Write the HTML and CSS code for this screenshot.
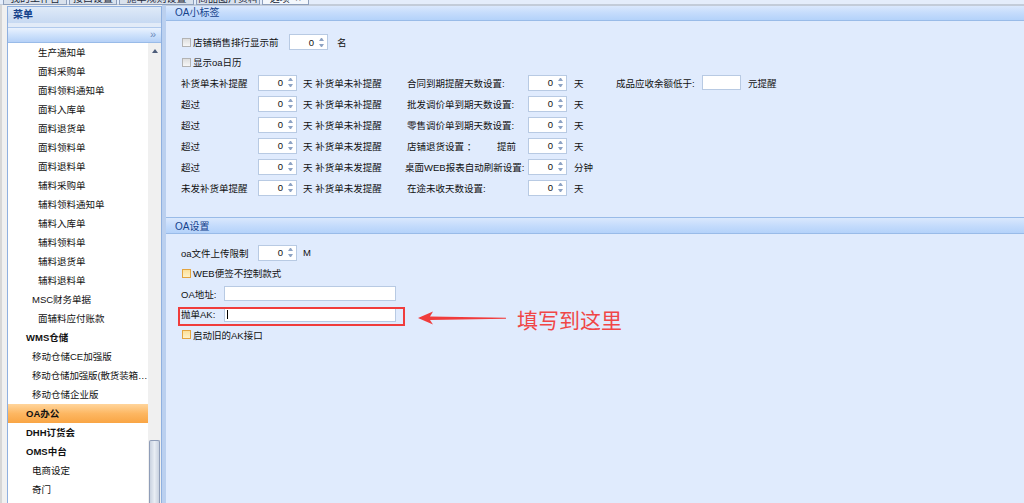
FILE: index.html
```html
<!DOCTYPE html>
<html lang="zh-CN">
<head>
    <meta charset="UTF-8">
    <title>选项</title>
    <link rel="stylesheet" href="styles.css">
</head>
<body>
    <div class="tabs">
        <div class="tab t1"><span>我的工作台</span></div>
        <div class="tab t2"><span>接口设置</span></div>
        <div class="tab t3"><span>抛单规则设置</span></div>
        <div class="tab t4"><span>商品图片资料</span></div>
        <div class="tab t5 on"><span>选项 &nbsp;×</span></div>
    </div>

    <div class="layout">
        <div class="side">
            <div class="side-head">菜单</div>
            <div class="side-tool">»</div>
            <div class="side-list">
                <div class="menu">
                    <div class="m3">生产通知单</div>
                    <div class="m3">面料采购单</div>
                    <div class="m3">面料领料通知单</div>
                    <div class="m3">面料入库单</div>
                    <div class="m3">面料退货单</div>
                    <div class="m3">面料领料单</div>
                    <div class="m3">面料退料单</div>
                    <div class="m3">辅料采购单</div>
                    <div class="m3">辅料领料通知单</div>
                    <div class="m3">辅料入库单</div>
                    <div class="m3">辅料领料单</div>
                    <div class="m3">辅料退货单</div>
                    <div class="m3">辅料退料单</div>
                    <div class="m2">MSC财务单据</div>
                    <div class="m3">面辅料应付账款</div>
                    <div class="m1">WMS仓储</div>
                    <div class="m2">移动仓储CE加强版</div>
                    <div class="m2 tight">移动仓储加强版(散货装箱版)</div>
                    <div class="m2">移动仓储企业版</div>
                    <div class="m1 on">OA办公</div>
                    <div class="m1">DHH订货会</div>
                    <div class="m1">OMS中台</div>
                    <div class="m2">电商设定</div>
                    <div class="m2">奇门</div>
                </div>
                <div class="scroll">
                    <div class="sb-up"></div>
                    <div class="thumb"></div>
                </div>
            </div>
        </div>

        <div class="content">
            <div class="panel-head">OA小标签</div>
            <div class="panel-body tags">
                <div class="row">
                    <span class="chk"></span>
                    <span class="w-rank">店铺销售排行显示前</span>
                    <span class="spin"><b>0</b><i class="arr"></i></span>
                    <span class="unit-name">名</span>
                </div>
                <div class="row">
                    <span class="chk"></span>
                    <span>显示oa日历</span>
                </div>

                <div class="frow">
                    <span class="c-lbl">补货单未补提醒</span>
                    <span class="spin"><b>0</b><i class="arr"></i></span>
                    <span class="c-suf">天 补货单未补提醒</span>
                    <span class="c-rl">合同到期提醒天数设置:</span>
                    <span class="spin"><b>0</b><i class="arr"></i></span>
                    <span class="c-rs">天</span>
                    <span class="c-ml">成品应收余额低于:</span>
                    <span class="txt w-money"></span>
                    <span class="c-mu">元提醒</span>
                </div>
                <div class="frow">
                    <span class="c-lbl">超过</span>
                    <span class="spin"><b>0</b><i class="arr"></i></span>
                    <span class="c-suf">天 补货单未补提醒</span>
                    <span class="c-rl">批发调价单到期天数设置:</span>
                    <span class="spin"><b>0</b><i class="arr"></i></span>
                    <span class="c-rs">天</span>
                </div>
                <div class="frow">
                    <span class="c-lbl">超过</span>
                    <span class="spin"><b>0</b><i class="arr"></i></span>
                    <span class="c-suf">天 补货单未补提醒</span>
                    <span class="c-rl">零售调价单到期天数设置:</span>
                    <span class="spin"><b>0</b><i class="arr"></i></span>
                    <span class="c-rs">天</span>
                </div>
                <div class="frow">
                    <span class="c-lbl">超过</span>
                    <span class="spin"><b>0</b><i class="arr"></i></span>
                    <span class="c-suf">天 补货单未发提醒</span>
                    <span class="c-rl split">店铺退货设置 ：<em>提前</em></span>
                    <span class="spin"><b>0</b><i class="arr"></i></span>
                    <span class="c-rs">天</span>
                </div>
                <div class="frow">
                    <span class="c-lbl">超过</span>
                    <span class="spin"><b>0</b><i class="arr"></i></span>
                    <span class="c-suf">天 补货单未发提醒</span>
                    <span class="c-rl wide">桌面WEB报表自动刷新设置:</span>
                    <span class="spin"><b>0</b><i class="arr"></i></span>
                    <span class="c-rs">分钟</span>
                </div>
                <div class="frow">
                    <span class="c-lbl">未发补货单提醒</span>
                    <span class="spin"><b>0</b><i class="arr"></i></span>
                    <span class="c-suf">天 补货单未发提醒</span>
                    <span class="c-rl">在途未收天数设置:</span>
                    <span class="spin"><b>0</b><i class="arr"></i></span>
                    <span class="c-rs">天</span>
                </div>
            </div>

            <div class="panel-head sub">OA设置</div>
            <div class="panel-body oa">
                <div class="orow">
                    <span class="c-lbl">oa文件上传限制</span>
                    <span class="spin"><b>0</b><i class="arr"></i></span>
                    <span class="unit-m">M</span>
                </div>
                <div class="orow">
                    <span class="chk warm"></span>
                    <span>WEB便签不控制款式</span>
                </div>
                <div class="orow">
                    <span class="c-addr">OA地址:</span>
                    <span class="txt w-addr"></span>
                </div>
                <div class="orow">
                    <span class="c-addr">抛单AK:</span>
                    <span class="txt w-addr"><i class="caret"></i></span>
                </div>
                <div class="orow">
                    <span class="chk warm"></span>
                    <span>启动旧的AK接口</span>
                </div>

                <!-- annotation drawn over the form -->
                <div class="mark-box"></div>
                <svg class="mark-arrow" width="90" height="16" viewBox="0 0 90 16">
                    <polygon points="0,8 15,1.5 12,6.4 88,7.8 88,8.8 12,10 15,14.5" fill="#f03c3c"/>
                </svg>
                <div class="mark-text">填写到这里</div>
            </div>
        </div>
    </div>
</body>
</html>
```

FILE: styles.css
```css
body {
    margin: 0;
    height: 503px;
    overflow: hidden;
    font-family: "Liberation Sans", "Noto Sans CJK SC", sans-serif;
    font-size: 9.5px;
    color: #111;
    background: #e0ebfd;
}

/* top tab strip, mostly scrolled out of view */
.tabs {
    height: 5px;
    display: flex;
    gap: 2px;
    padding-left: 3px;
    background: #e4edfb;
    box-shadow: inset 0 -1px #c3ccd9;
    overflow: hidden;
}
.tab {
    height: 5px;
    box-sizing: border-box;
    border: 1px solid #8d9fbc;
    border-top: none;
    background: #d9e1ec;
    overflow: hidden;
    font-size: 10px;
    line-height: 10px;
    text-align: center;
    color: #1e2a3a;
}
.tab span {
    display: block;
    margin-top: -6px;
    white-space: nowrap;
}
.tab.on {
    background: #f3f7fc;
}
.t1 { width: 64px; }
.t2 { width: 48px; }
.t3 { width: 75px; }
.t4 { width: 64px; }
.t5 { width: 47px; }

.layout {
    display: flex;
    height: 498px;
    background: #f0f0f0;
    box-shadow: inset 2px 0 #d6d6d6;
}

/* left menu */
.side {
    width: 155px;
    margin: 1px 0 0 7px;
    box-sizing: border-box;
    border: 1px solid #8fb0df;
    border-bottom: none;
    background: #e2ebf8;
    display: flex;
    flex-direction: column;
}
.side-head {
    height: 16px;
    line-height: 16px;
    padding-left: 5px;
    margin-bottom: 4px;
    font-size: 10px;
    font-weight: bold;
    color: #15428b;
    background: linear-gradient(#dfeaf8, #c7d9f2);
}
.side-tool {
    height: 16px;
    box-sizing: border-box;
    border-top: 1px solid #b0c9ec;
    border-bottom: 1px solid #99bbe8;
    background: linear-gradient(#eaf2fe, #cbe0fb 55%, #b6d1f7);
    text-align: right;
    padding-right: 5px;
    font-size: 11px;
    line-height: 13px;
    color: #6f8bbb;
}
.side-list {
    flex: 1;
    min-height: 0;
    display: flex;
    background: #fff;
}
.menu {
    width: 140px;
    overflow: hidden;
}
.menu div {
    height: 19px;
    line-height: 19px;
    white-space: nowrap;
    overflow: hidden;
    text-overflow: ellipsis;
    color: #111;
}
.menu .m1 {
    padding-left: 18px;
    font-weight: bold;
}
.menu .m2 {
    padding-left: 24px;
}
.menu .m3 {
    padding-left: 30px;
}
.menu .tight {
    letter-spacing: -0.15px;
}
.menu .on {
    background: linear-gradient(#ffd59c, #fdb762 50%, #f9a544);
}
.scroll {
    width: 13px;
    background: #f0f0f0;
    display: flex;
    flex-direction: column;
}
.sb-up {
    height: 16px;
    display: flex;
    align-items: center;
    justify-content: center;
}
.sb-up::before {
    content: "";
    border-left: 3px solid transparent;
    border-right: 3px solid transparent;
    border-bottom: 4px solid #4e5d7a;
}
.thumb {
    margin-top: auto;
    height: 63px;
    margin-left: 1px;
    margin-right: 1px;
    box-sizing: border-box;
    border: 1px solid #8f9db8;
    border-bottom: none;
    border-radius: 2px 2px 0 0;
    background: linear-gradient(90deg, #c9d2e0, #e8edf4 50%, #c9d2e0);
}

/* right side panels */
.content {
    flex: 1;
    border-left: 4px solid #bbd0ef;
    background: #e0ebfd;
}
.panel-head {
    height: 16px;
    box-sizing: border-box;
    border-top: 1px solid #c3ccd9;
    border-bottom: 1px solid #99bbe8;
    background: linear-gradient(#dae8fd, #c5dcfc 50%, #b4d2fa);
    padding-left: 9px;
    font-size: 10px;
    line-height: 14px;
    color: #15428b;
}
.panel-head.sub {
    height: 17px;
    line-height: 17px;
    border-top-color: #99bbe8;
}
.panel-body {
    padding-left: 15px;
}
.tags {
    height: 196px;
    box-sizing: border-box;
    padding-top: 11px;
}
.oa {
    position: relative;
    padding-top: 8.5px;
}

.row {
    display: flex;
    align-items: center;
    height: 20px;
}
.frow {
    display: flex;
    align-items: center;
    height: 21px;
    white-space: nowrap;
}
.orow {
    display: flex;
    align-items: center;
    height: 20.5px;
    white-space: nowrap;
}

.chk {
    width: 9px;
    height: 9px;
    box-sizing: border-box;
    margin: 0 2px 0 1px;
    border: 1px solid #b3b3b3;
    background: linear-gradient(#dedede, #f7f7f7);
}
.chk.warm {
    border-color: #e3a440;
    background: linear-gradient(#fbe09a, #fef2c8);
}

.w-rank { width: 96px; }
.unit-name { padding-left: 9px; }
.unit-m { padding-left: 6px; }

.c-lbl { width: 77px; }
.c-suf { width: 110px; padding-left: 6px; box-sizing: border-box; }
.c-rl { width: 121px; }
.c-rl.wide { width: 123px; margin-left: -2px; }
.c-rl.split { display: flex; }
.c-rl.split em {
    font-style: normal;
    margin-left: auto;
    padding-right: 12px;
}
.c-rs { width: 49px; padding-left: 7px; box-sizing: border-box; }
.c-ml { width: 86px; }
.c-mu { padding-left: 7px; }
.c-addr { width: 43px; }

.spin {
    width: 39px;
    height: 16px;
    box-sizing: border-box;
    border: 1px solid #b8cae3;
    background: #fff;
    display: flex;
    align-items: center;
    justify-content: flex-end;
    padding-right: 3px;
}
.spin b {
    font-weight: normal;
    margin-right: 5px;
}
.arr {
    width: 5px;
    display: flex;
    flex-direction: column;
    gap: 3px;
}
.arr::before,
.arr::after {
    content: "";
    border-left: 2.5px solid transparent;
    border-right: 2.5px solid transparent;
}
.arr::before {
    border-bottom: 3px solid #8ea3c4;
}
.arr::after {
    border-top: 3px solid #8ea3c4;
}

.txt {
    height: 15px;
    box-sizing: border-box;
    border: 1px solid #b8cae3;
    background: #fff;
    display: flex;
    align-items: center;
}
.w-money { width: 39px; }
.w-addr { width: 172px; }
.caret {
    width: 1px;
    height: 9px;
    margin-left: 2px;
    background: #000;
}

/* red hint over the AK field */
.mark-box {
    position: absolute;
    left: 12px;
    top: 73px;
    width: 227px;
    height: 19px;
    box-sizing: border-box;
    border: 2px solid #f03c3c;
}
.mark-arrow {
    position: absolute;
    left: 252px;
    top: 76px;
}
.mark-text {
    position: absolute;
    left: 351px;
    top: 72px;
    font-family: "Noto Sans CJK SC", sans-serif;
    font-size: 21px;
    line-height: 26px;
    color: #f04646;
}
```
